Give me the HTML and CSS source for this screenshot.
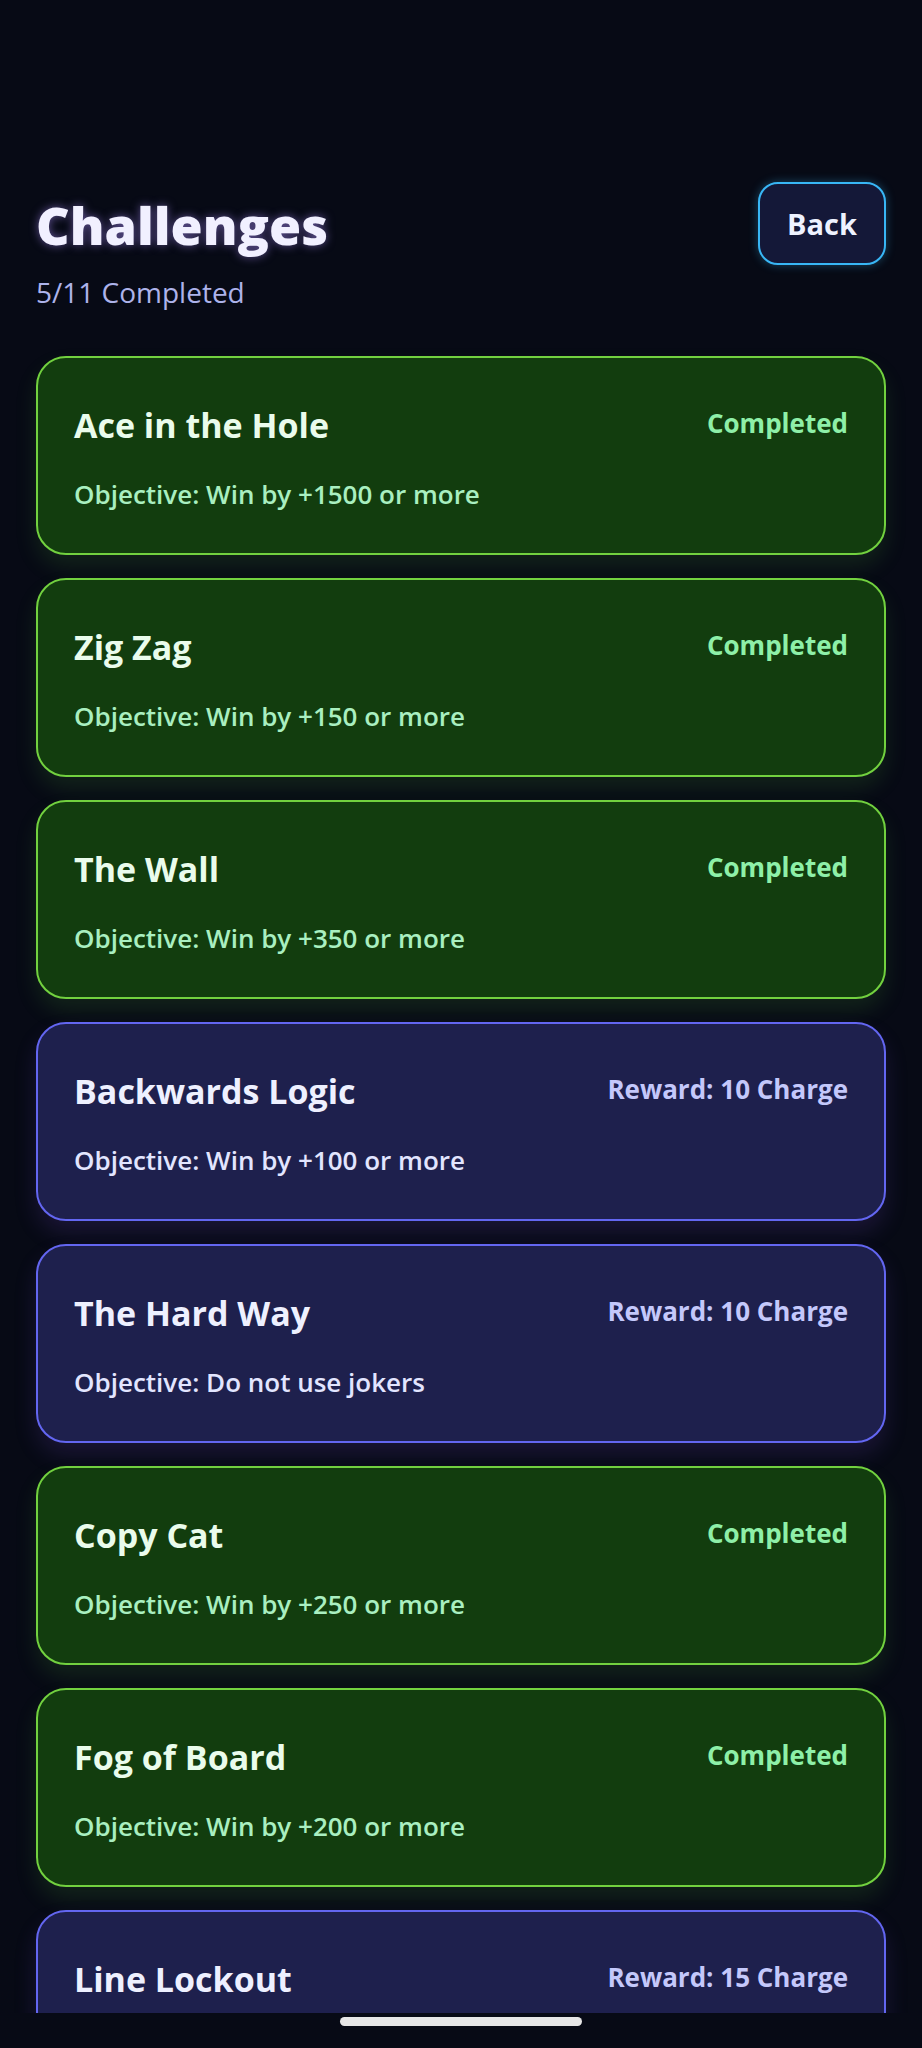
FILE: index.html
```html
<!DOCTYPE html>
<html lang="en">

<head>
    <meta charset="UTF-8">
    <meta name="viewport" content="width=device-width, initial-scale=1.0">
    <title>Challenges</title>
    <link rel="stylesheet" href="styles.css">
</head>

<body>

    <div class="screen">
        <div class="page-header">
            <div>
                <h1 class="page-title">Challenges</h1>
                <div class="progress-text">5/11 Completed</div>
            </div>
            <button class="back-btn">Back</button>
        </div>

        <div class="challenge-list">
            <div class="challenge-card done">
                <div class="card-top">
                    <div class="card-title">Ace in the Hole</div>
                    <div class="card-status">Completed</div>
                </div>
                <div class="card-objective">Objective: Win by +1500 or more</div>
            </div>

            <div class="challenge-card done">
                <div class="card-top">
                    <div class="card-title">Zig Zag</div>
                    <div class="card-status">Completed</div>
                </div>
                <div class="card-objective">Objective: Win by +150 or more</div>
            </div>

            <div class="challenge-card done">
                <div class="card-top">
                    <div class="card-title">The Wall</div>
                    <div class="card-status">Completed</div>
                </div>
                <div class="card-objective">Objective: Win by +350 or more</div>
            </div>

            <div class="challenge-card">
                <div class="card-top">
                    <div class="card-title">Backwards Logic</div>
                    <div class="card-status">Reward: 10 Charge</div>
                </div>
                <div class="card-objective">Objective: Win by +100 or more</div>
            </div>

            <div class="challenge-card">
                <div class="card-top">
                    <div class="card-title">The Hard Way</div>
                    <div class="card-status">Reward: 10 Charge</div>
                </div>
                <div class="card-objective">Objective: Do not use jokers</div>
            </div>

            <div class="challenge-card done">
                <div class="card-top">
                    <div class="card-title">Copy Cat</div>
                    <div class="card-status">Completed</div>
                </div>
                <div class="card-objective">Objective: Win by +250 or more</div>
            </div>

            <div class="challenge-card done">
                <div class="card-top">
                    <div class="card-title">Fog of Board</div>
                    <div class="card-status">Completed</div>
                </div>
                <div class="card-objective">Objective: Win by +200 or more</div>
            </div>

            <!-- last card runs under the bottom edge of the screen -->
            <div class="challenge-card">
                <div class="card-top">
                    <div class="card-title">Line Lockout</div>
                    <div class="card-status">Reward: 15 Charge</div>
                </div>
            </div>
        </div>
    </div>

    <div class="home-bar">
        <div class="home-indicator"></div>
    </div>

</body>

</html>
```

FILE: styles.css
```css
/* Global Styles */
body {
    font-family: 'Open Sans', 'Noto Sans', sans-serif;
    background-color: #070a15;
    margin: 0;
    padding: 0;
    height: 2048px;
    display: flex;
    flex-direction: column;
    overflow: hidden;
}

.screen {
    height: 2013px;
    overflow: hidden;
    padding: 0 36px;
}

/* Header */
.page-header {
    display: flex;
    justify-content: space-between;
    align-items: flex-start;
    padding-top: 182px;
}

.page-title {
    margin: 14px 0 0;
    font-size: 52px;
    font-weight: 800;
    line-height: 1.1;
    color: #f1f0ff;
    text-shadow: 0 0 10px rgba(167, 139, 250, 0.55);
}

.progress-text {
    margin-top: 20px;
    font-size: 28px;
    font-weight: 500;
    color: #adb3ea;
}

.back-btn {
    width: 128px;
    height: 83px;
    background-color: #141838;
    color: #eef2ff;
    border: 2px solid #38b6f5;
    border-radius: 20px;
    font-family: inherit;
    font-size: 29px;
    font-weight: 700;
    box-shadow: 0 0 10px rgba(56, 182, 245, 0.35);
    cursor: pointer;
}

/* Challenge Cards */
.challenge-list {
    display: flex;
    flex-direction: column;
    gap: 23px;
    margin-top: 45px;
}

.challenge-card {
    height: 199px;
    box-sizing: border-box;
    padding: 44px 36px 0;
    background-color: #1e204d;
    border: 2px solid #6366f1;
    border-radius: 30px;
    box-shadow: 0 12px 22px rgba(110, 70, 200, 0.18);
}

.challenge-card.done {
    background-color: #123d0e;
    border-color: #72d13f;
    box-shadow: 0 12px 22px rgba(90, 200, 60, 0.13);
}

.card-top {
    display: flex;
    justify-content: space-between;
    align-items: flex-start;
}

.card-title {
    font-size: 34px;
    font-weight: 700;
    color: #eef0ff;
}

.card-status {
    font-size: 26px;
    font-weight: 700;
    color: #c4c8fb;
    padding-top: 3px;
}

.card-objective {
    margin-top: 28px;
    font-size: 26px;
    font-weight: 600;
    color: #e2e5ff;
}

.done .card-title {
    color: #eafcec;
}

.done .card-status {
    color: #8ef0a8;
}

.done .card-objective {
    color: #a9efc0;
}

/* Home Indicator */
.home-bar {
    flex: 1;
    display: flex;
    justify-content: center;
    padding-top: 4px;
}

.home-indicator {
    width: 242px;
    height: 9px;
    border-radius: 5px;
    background-color: #e6e6e6;
}
```
